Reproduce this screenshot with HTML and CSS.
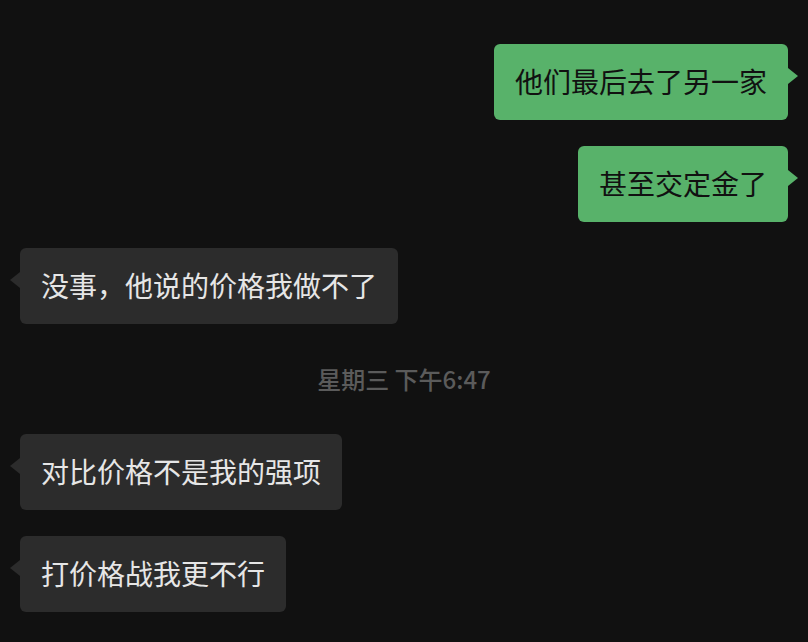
FILE: index.html
```html
<!DOCTYPE html>
<html lang="zh-CN">
<head>
    <meta charset="UTF-8">
    <meta name="viewport" content="width=device-width, initial-scale=1.0">
    <title>聊天</title>
    <link rel="stylesheet" href="styles.css">
</head>
<body>
    <div class="chat">
        <div class="time time-top">星期三 下午6:30</div>

        <div class="row mine">
            <div class="bubble">他们最后去了另一家</div>
        </div>
        <div class="row mine">
            <div class="bubble">甚至交定金了</div>
        </div>
        <div class="row theirs">
            <div class="bubble">没事，他说的价格我做不了</div>
        </div>

        <div class="time">星期三 下午6:47</div>

        <div class="row theirs">
            <div class="bubble">对比价格不是我的强项</div>
        </div>
        <div class="row theirs">
            <div class="bubble">打价格战我更不行</div>
        </div>
    </div>
</body>
</html>
```

FILE: styles.css
```css
html, body {
    margin: 0;
    padding: 0;
    background: #111111;
}
body {
    font-family: "Noto Sans CJK SC", "Noto Sans", sans-serif;
    overflow: hidden;
}
.chat {
    display: flex;
    flex-direction: column;
    gap: 26px;
    padding: 0 20px;
}
.row {
    display: flex;
}
.mine { justify-content: flex-end; }
.theirs { justify-content: flex-start; }

.bubble {
    position: relative;
    font-size: 28px;
    line-height: 40px;
    padding: 17px 21px 19px;
    border-radius: 6px;
}
.mine .bubble {
    background: #58b26a;
    color: #111111;
}
.theirs .bubble {
    background: #2c2c2c;
    color: #e6e6e6;
}
.bubble::after {
    content: "";
    position: absolute;
    top: 24px;
    border-top: 8px solid transparent;
    border-bottom: 8px solid transparent;
}
.mine .bubble::after {
    right: -10px;
    border-left: 10px solid #58b26a;
}
.theirs .bubble::after {
    left: -10px;
    border-right: 10px solid #2c2c2c;
}

.time {
    text-align: center;
    font-family: "Noto Sans CJK SC", "Inter", sans-serif;
    font-size: 24px;
    line-height: 30px;
    font-weight: 500;
    color: #5b5b5b;
    margin: 14px 0 14px;
}
.time-top {
    margin: -29px 0 17px;
    color: #3a3a3a;
}
```
